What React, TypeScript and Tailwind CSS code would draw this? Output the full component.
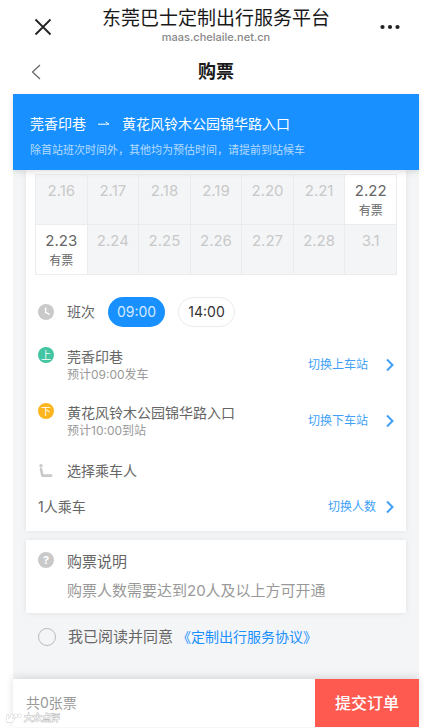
import React from 'react';
import type { ReactNode } from 'react';

type Day = { date: string; open?: boolean };

const weeks: Day[][] = [
  [
    { date: '2.16' },
    { date: '2.17' },
    { date: '2.18' },
    { date: '2.19' },
    { date: '2.20' },
    { date: '2.21' },
    { date: '2.22', open: true },
  ],
  [
    { date: '2.23', open: true },
    { date: '2.24' },
    { date: '2.25' },
    { date: '2.26' },
    { date: '2.27' },
    { date: '2.28' },
    { date: '3.1' },
  ],
];

const Arrow = () => (
  <svg width="10" height="14" viewBox="0 0 10 14" fill="none" aria-hidden="true">
    <path d="M3 1.5 8.5 7 3 12.5" stroke="#429ff8" strokeWidth="2" />
  </svg>
);

const ClockIcon = () => (
  <svg width="16" height="16" viewBox="0 0 16 16" fill="none" aria-hidden="true">
    <circle cx="8" cy="8" r="8" fill="#c9c9c9" />
    <path d="M7.6 3.4v5l4 2" stroke="#fff" strokeWidth="1.4" />
  </svg>
);

const SeatIcon = () => (
  <svg width="16" height="16" viewBox="0 0 16 16" fill="none" aria-hidden="true">
    <circle cx="3" cy="2.8" r="1.7" fill="#c9c9c9" />
    <path d="M3 6 4.4 12.6H13.2" stroke="#c9c9c9" strokeWidth="2.6" strokeLinecap="round" strokeLinejoin="round" />
  </svg>
);

const DayTable = () => (
  <table className="w-full table-fixed border-collapse">
    <tbody>
      {weeks.map((week) => (
        <tr key={week[0].date}>
          {week.map(({ date, open }) => (
            <td
              key={date}
              className={
                open
                  ? 'h-[50px] border border-[#ebecee] bg-white pt-2 text-center align-top text-[#666]'
                  : 'h-[50px] border border-[#ebecee] bg-[#f4f5f7] pt-2 text-center align-top text-[#c9c9c9]'
              }
            >
              <div className="text-[15px] leading-4">{date}</div>
              {open && <div className="pt-1 text-xs leading-4">有票</div>}
            </td>
          ))}
        </tr>
      ))}
    </tbody>
  </table>
);

type StopProps = { badge: ReactNode; name: string; time: string; action: string };

const Stop: React.FC<StopProps> = ({ badge, name, time, action }) => (
  <div className="flex h-14 items-center justify-between">
    <div className="flex gap-[13px]">
      {badge}
      <div>
        <div className="text-sm leading-5 text-[#666]">{name}</div>
        <div className="text-xs leading-4 text-[#999]">{time}</div>
      </div>
    </div>
    <button type="button" className="flex items-center gap-4 text-xs text-[#429ff8]">
      {action}
      <Arrow />
    </button>
  </div>
);

const Watermark = () => (
  <div className="absolute bottom-1 left-1.5 z-20 flex items-center gap-0.5 text-[9px] leading-3 text-white [-webkit-text-stroke:1px_#bbb] [paint-order:stroke_fill]">
    <svg width="16" height="10" viewBox="0 0 16 10" fill="#fff" stroke="#c4c4c4" strokeWidth="0.8" aria-hidden="true">
      <path d="M1 1.5h1.6v5.4L5.4 2h2.4L5.6 6.2 8.4 5v2.2L5 9.3H1z" />
      <circle cx="10" cy="2.8" r="1.8" />
      <circle cx="13.8" cy="2.6" r="1.6" />
    </svg>
    大众点评
  </div>
);

const App = () => (
  <div className="relative min-h-screen bg-white pr-[5px] pl-[13px] font-['Inter','Noto_Sans_CJK_SC',sans-serif]">
    <div className="flex min-h-screen flex-col pb-px">
      <header className="flex h-[50px] items-center justify-between pt-1 pr-[19px] pl-[21px]">
        <button type="button" aria-label="关闭">
          <svg width="18" height="18" viewBox="0 0 18 18" fill="none">
            <path d="m1.5 1.5 15 15m0-15-15 15" stroke="#222" strokeWidth="1.8" />
          </svg>
        </button>
        <div className="text-center">
          <div className="text-[19px] leading-5 text-[#1a1a1a]">东莞巴士定制出行服务平台</div>
          <div className="text-[11px] leading-4 font-medium text-[#888]">maas.chelaile.net.cn</div>
        </div>
        <button type="button" aria-label="更多">
          <svg width="20" height="18" viewBox="0 0 20 18" fill="#222">
            <circle cx="2.5" cy="9" r="2.1" />
            <circle cx="10" cy="9" r="2.1" />
            <circle cx="17.5" cy="9" r="2.1" />
          </svg>
        </button>
      </header>

      <nav className="grid h-11 grid-cols-3 items-center px-[18px]">
        <button type="button" aria-label="返回" className="justify-self-start">
          <svg width="10" height="16" viewBox="0 0 10 16" fill="none">
            <path d="M9 1 1.5 8 9 15" stroke="#666" strokeWidth="1.2" />
          </svg>
        </button>
        <h1 className="text-center text-lg font-bold text-[#1a1a1a]">购票</h1>
      </nav>

      <section className="z-10 flex h-19 flex-col justify-center gap-2 bg-[#1890ff] px-[17px] pt-2 text-white shadow-[0_2px_6px_rgba(0,0,0,0.12)]">
        <div className="flex items-center gap-3 text-sm leading-5">
          <span>莞香印巷</span>
          <svg width="12" height="6" viewBox="0 0 12 6" aria-hidden="true">
            <path d="M0 3.2h11L7.6.8" fill="none" stroke="#fff" />
          </svg>
          <span>黄花风铃木公园锦华路入口</span>
        </div>
        <p className="text-[11px] leading-4 text-[#b5dbff]">除首站班次时间外，其他均为预估时间，请提前到站候车</p>
      </section>

      <main className="flex-1 bg-[#f4f5f7] px-[13px]">
        <section className="bg-white pt-1 pb-2.5 shadow-[0_0_6px_rgba(0,0,0,0.08)]">
          <div className="px-[9px]">
            <DayTable />
          </div>
          <div className="px-3">
            <div className="flex h-[62px] items-center gap-[13px] pt-3">
              <ClockIcon />
              <span className="text-sm text-[#666]">班次</span>
              <button type="button" className="h-[30px] w-[57px] rounded-full bg-[#1890ff] text-sm text-[#d5eaff]">09:00</button>
              <button type="button" className="h-[30px] w-[57px] rounded-full border border-[#ececec] text-sm text-[#333]">14:00</button>
            </div>
            <Stop
              badge={<span className="flex size-4 items-center justify-center rounded-full bg-[#42c5a0] text-[10px] text-white">上</span>}
              name="莞香印巷"
              time="预计09:00发车"
              action="切换上车站"
            />
            <Stop
              badge={<span className="flex size-4 items-center justify-center rounded-full bg-[#fdb51e] text-[10px] text-white">下</span>}
              name="黄花风铃木公园锦华路入口"
              time="预计10:00到站"
              action="切换下车站"
            />
            <div className="flex h-11 items-center gap-[13px]">
              <SeatIcon />
              <span className="text-sm text-[#666]">选择乘车人</span>
            </div>
            <div className="flex h-7 items-center justify-between">
              <span className="text-sm text-[#666]">1人乘车</span>
              <button type="button" className="flex items-center gap-2 text-xs text-[#429ff8]">
                切换人数
                <Arrow />
              </button>
            </div>
          </div>
        </section>

        <section className="mt-[9px] flex gap-[13px] bg-white p-3 shadow-[0_0_6px_rgba(0,0,0,0.08)]">
          <span className="flex size-4 items-center justify-center rounded-full bg-[#c9c9c9] text-[11px] font-bold text-white">?</span>
          <div className="text-[15px]">
            <h2 className="leading-5 text-[#666]">购票说明</h2>
            <p className="pt-[9px] leading-5 text-[#999]">购票人数需要达到20人及以上方可开通</p>
          </div>
        </section>

        <div className="flex items-center gap-1 px-3 py-3 leading-6">
          <label className="flex items-center gap-3 text-[15px] text-[#666]">
            <input type="checkbox" className="size-[18px] appearance-none rounded-full border border-[#bbb] checked:bg-[#1890ff]" />
            我已阅读并同意
          </label>
          <a href="#agreement" className="text-sm text-[#1890ff]">《定制出行服务协议》</a>
        </div>
      </main>

      <footer className="z-10 flex h-12 justify-between bg-white shadow-[0_-2px_8px_rgba(0,0,0,0.12)]">
        <span className="flex items-center pl-[13px] text-sm text-[#999]">共0张票</span>
        <button type="button" className="w-[104px] bg-[#ff5a50] text-base font-medium text-white">提交订单</button>
      </footer>
    </div>
    <Watermark />
  </div>
);

export default App;
